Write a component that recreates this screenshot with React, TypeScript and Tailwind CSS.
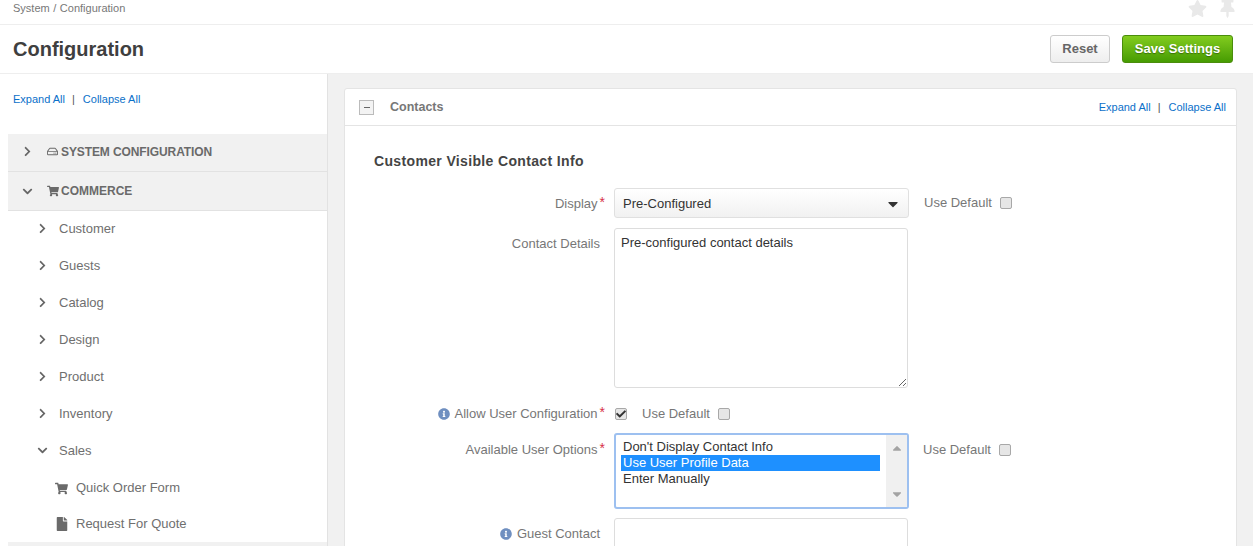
import { FaChevronRight, FaChevronDown, FaShoppingCart, FaFile, FaInfoCircle, FaStar, FaThumbtack, FaRegHdd, FaCaretDown, FaCaretUp, FaCheck } from "react-icons/fa"

function ExpandLinks() {
  return (
    <div className="flex items-center text-[11px] text-[#0b70c9]">
      <span>Expand All</span>
      <span className="ml-[7px] mr-[8px] text-[#555]">|</span>
      <span>Collapse All</span>
    </div>
  )
}

function CheckBox({ checked }: { checked?: boolean }) {
  return (
    <div className="relative w-[12px] h-[12px] rounded-[2px] border border-[#a8a8a8] bg-[#e6e6e6]">
      {checked && <FaCheck className="absolute left-[0px] top-[0px] text-[10px] text-[#333]" />}
    </div>
  )
}

function UseDefault({ className }: { className: string }) {
  return (
    <div className={"flex items-center gap-[8px] text-[#777] " + className}>
      <span>Use Default</span>
      <CheckBox />
    </div>
  )
}

function Star() {
  return <span className="text-[#d62f4a] text-[14px] leading-none self-start ml-[2px]">*</span>
}

function SideItem({ label, open }: { label: string; open?: boolean }) {
  return (
    <div className="flex items-center h-[37px] pl-[37px] text-[#6f6f6f]">
      <div className="w-[22px]">
        {open ? <FaChevronDown className="text-[11px] text-[#666]" /> : <FaChevronRight className="text-[11px] text-[#666]" />}
      </div>
      <span>{label}</span>
    </div>
  )
}

function SubItem({ label, icon }: { label: string; icon: React.ReactNode }) {
  return (
    <div className="flex items-center h-[36px] pl-[55px] text-[#6f6f6f]">
      <div className="w-[21px] text-[#6a6a6a]">{icon}</div>
      <span>{label}</span>
    </div>
  )
}

function Sidebar() {
  return (
    <aside className="w-[328px] shrink-0 bg-white border-r border-[#e2e2e2] pl-[8px]">
      <div className="pl-[5px] pt-[16px] h-[60px]">
        <ExpandLinks />
      </div>
      <div className="flex items-center h-[38px] pb-[2px] bg-[#f1f1f1] border-b border-[#e2e2e2] pl-[14px] text-[#6a6a6a] text-[12px] font-bold tracking-[-0.1px]">
        <div className="w-[25px]"><FaChevronRight className="text-[11px] text-[#666]" /></div>
        <FaRegHdd className="text-[11px] mr-[3px]" />
        <span>SYSTEM CONFIGURATION</span>
      </div>
      <div className="flex items-center h-[39px] bg-[#f1f1f1] border-b border-[#e2e2e2] pl-[14px] text-[#6a6a6a] text-[12px] font-bold">
        <div className="w-[25px]"><FaChevronDown className="text-[11px] text-[#666]" /></div>
        <FaShoppingCart className="text-[12px] mr-[2px]" />
        <span>COMMERCE</span>
      </div>
      <div className="-ml-[8px] -mt-[1px]">
        <SideItem label="Customer" />
        <SideItem label="Guests" />
        <SideItem label="Catalog" />
        <SideItem label="Design" />
        <SideItem label="Product" />
        <SideItem label="Inventory" />
        <SideItem label="Sales" open />
        <div className="mt-[1px]">
          <SubItem label="Quick Order Form" icon={<FaShoppingCart className="text-[13px]" />} />
          <SubItem label="Request For Quote" icon={<FaFile className="text-[14px]" />} />
        </div>
      </div>
      <div className="h-[20px] bg-[#f1f1f1]"></div>
    </aside>
  )
}

function FormArea() {
  return (
    <div className="pl-[29px] text-[#777]">
      <h3 className="h-[62px] pt-[25px] text-[14px] font-bold text-[#444] leading-[20px] tracking-[0.35px]">Customer Visible Contact Info</h3>

      <div className="flex items-center h-[30px]">
        <div className="w-[231px] flex justify-end pt-[1px]">
          <span>Display</span><Star />
        </div>
        <div className="ml-[9px] w-[295px] h-[30px] flex items-center justify-between pl-[8px] pr-[7px] pt-[1px] rounded-[3px] border border-[#e0e0e0] bg-gradient-to-b from-white to-[#f1f1f1] text-[#333]">
          <span>Pre-Configured</span>
          <FaCaretDown className="text-[16px] text-[#333]" />
        </div>
        <UseDefault className="ml-[15px]" />
      </div>

      <div className="flex mt-[10px] h-[160px]">
        <div className="w-[226px] text-right pt-[7px]">Contact Details</div>
        <textarea
          readOnly
          defaultValue="Pre-configured contact details"
          className="ml-[14px] w-[294px] h-[160px] rounded-[3px] border border-[#ddd] px-[6px] py-[5px] text-[#333] outline-none"
        />
      </div>

      <div className="flex items-center h-[18px] mt-[16px] pt-[1px]">
        <div className="w-[231px] flex justify-end items-center">
          <FaInfoCircle className="text-[12px] text-[#6f8fc0] mr-[4px]" />
          <span>Allow User Configuration</span><Star />
        </div>
        <div className="ml-[10px]"><CheckBox checked /></div>
        <UseDefault className="ml-[15px]" />
      </div>

      <div className="flex mt-[11px] h-[76px]">
        <div className="w-[231px] flex justify-end pt-[8px] h-fit">
          <span>Available User Options</span><Star />
        </div>
        <div className="ml-[9px] w-[295px] h-[76px] flex rounded-[3px] border-2 border-[#9dc0f0] text-[#333] overflow-hidden leading-[16px]">
          <div className="flex-1 pt-[4px] pl-[5px]">
            <div className="pl-[2px]">Don't Display Contact Info</div>
            <div className="pl-[2px] bg-[#1e90ff] text-white">Use User Profile Data</div>
            <div className="pl-[2px]">Enter Manually</div>
          </div>
          <div className="w-[21px] ml-[6px] bg-[#f0f0f0] flex flex-col justify-between items-center py-[6px] text-[#a3a3a3]">
            <FaCaretUp className="text-[14px]" />
            <FaCaretDown className="text-[14px]" />
          </div>
        </div>
        <UseDefault className="ml-[14px] h-[18px] mt-[8px]" />
      </div>

      <div className="flex mt-[9px]">
        <div className="w-[226px] flex justify-end items-center pt-[7px] h-fit">
          <FaInfoCircle className="text-[12px] text-[#6f8fc0] mr-[5px]" />
          <span>Guest Contact</span>
        </div>
        <div className="ml-[14px] w-[294px] h-[40px] rounded-[3px] border border-[#ddd] bg-white"></div>
      </div>
    </div>
  )
}

export default function App() {
  return (
    <div className="h-[546px] overflow-hidden bg-white text-[13px] leading-[18px] font-['Liberation_Sans',Arial,sans-serif]">
      <div className="flex items-start justify-between h-[25px] border-b border-[#eee] pl-[13px] pr-[16px]">
        <span className="text-[11px] leading-[16px] text-[#777] [word-spacing:0.5px]">System / Configuration</span>
        <div className="flex gap-[11px] text-[19px] text-[#e9e9e9] -mt-[1px]">
          <FaStar />
          <FaThumbtack />
        </div>
      </div>

      <div className="flex items-center justify-between h-[49px] border-b border-[#eee] pl-[13px] pr-[20px]">
        <h1 className="text-[20px] font-bold text-[#3f3f3f]">Configuration</h1>
        <div className="flex gap-[12px]">
          <button className="w-[60px] h-[28px] rounded-[3px] border border-[#ccc] bg-gradient-to-b from-white to-[#eee] font-bold text-[#666]">Reset</button>
          <button className="w-[111px] h-[28px] rounded-[3px] border border-[#4a8d0c] bg-gradient-to-b from-[#82cc1e] to-[#469c02] font-bold text-white [text-shadow:0_1px_1px_rgba(0,0,0,0.35)]">Save Settings</button>
        </div>
      </div>

      <div className="flex h-[472px]">
        <Sidebar />
        <main className="flex-1 bg-[#f1f1f1] pt-[14px] pl-[16px] pr-[16px]">
          <section className="h-[500px] bg-white rounded-[3px] border border-[#e4e4e4]">
            <div className="flex items-center justify-between h-[37px] border-b border-[#e4e4e4] pl-[14px] pr-[10px]">
              <div className="flex items-center">
                <div className="flex items-center justify-center w-[15px] h-[15px] border border-[#bbb] bg-[#f3f3f3]">
                  <div className="w-[6px] h-px bg-[#666]"></div>
                </div>
                <span className="ml-[16px] text-[12.5px] font-bold text-[#777]">Contacts</span>
              </div>
              <ExpandLinks />
            </div>
            <FormArea />
          </section>
        </main>
      </div>
    </div>
  )
}
